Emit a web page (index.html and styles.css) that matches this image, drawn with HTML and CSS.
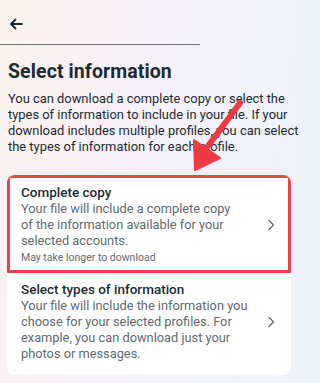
FILE: index.html
```html
<!DOCTYPE html>
<html>
<head>
<meta charset="utf-8">
<link rel="stylesheet" href="styles.css">
</head>
<body>
<div class="page">
  <header class="topbar">
    <svg class="back" width="14" height="12" viewBox="0 0 14 12"><path d="M13 6H2M6.5 1.5L2 6l4.5 4.5" fill="none" stroke="#1c2b33" stroke-width="1.8" stroke-linecap="round" stroke-linejoin="round"/></svg>
  </header>
  <main class="content">
    <h1 class="title">Select information</h1>
    <p class="intro">You can download a complete copy or select the types of information to include in your file. If your download includes multiple profiles, you can select the types of information for each profile.</p>
    <div class="card">
      <div class="item highlighted">
        <div class="item-text">
          <div class="item-title">Complete copy</div>
          <div class="item-desc">Your file will include a complete copy of the information available for your selected accounts.</div>
          <div class="item-note">May take longer to download</div>
        </div>
        <svg class="chev" width="8" height="12" viewBox="0 0 8 12"><path d="M2 1.5L6.5 6 2 10.5" fill="none" stroke="#5f6a72" stroke-width="1.3" stroke-linecap="round" stroke-linejoin="round"/></svg>
      </div>
      <div class="item">
        <div class="item-text">
          <div class="item-title">Select types of information</div>
          <div class="item-desc">Your file will include the information you choose for your selected profiles. For example, you can download just your photos or messages.</div>
        </div>
        <svg class="chev" width="8" height="12" viewBox="0 0 8 12"><path d="M2 1.5L6.5 6 2 10.5" fill="none" stroke="#5f6a72" stroke-width="1.3" stroke-linecap="round" stroke-linejoin="round"/></svg>
      </div>
    </div>
  </main>
  <svg class="annot-arrow" width="80" height="80" viewBox="0 0 80 80"><path d="M58 5 L 26 48" stroke="#ee3b43" stroke-width="6" stroke-linecap="round" fill="none"/><path d="M13 72 L12 42 L38 60 Z" fill="#ee3b43" stroke="#ee3b43" stroke-width="2" stroke-linejoin="round"/></svg>
</div>
</body>
</html>
```
FILE: styles.css
```css
* { box-sizing: border-box; }
html, body { margin: 0; padding: 0; background: #eef3fb; }
body {
  width: 300px;
  height: 383px;
  overflow: hidden;
  font-family: "Roboto", "Noto Sans", sans-serif;
  color: #1c2b33;
}
.page {
  position: relative;
  width: 300px;
  height: 383px;
  background: linear-gradient(100deg, #fdf3ef 0%, #f6f1f8 40%, #eef3fb 100%);
}
.topbar {
  height: 45px;
  width: 200px;
  border-bottom: 1px solid #6b7378;
  display: flex;
  align-items: center;
  padding-left: 9px;
  padding-top: 4px;
}
.back { display: block; }
.content { padding: 0 7px; }
.title {
  margin: 15px 0 0 1px;
  font-size: 19.5px;
  font-weight: 700;
  line-height: 24px;
  letter-spacing: 0.1px;
}
.intro {
  margin: 7px -7px 0 1px;
  font-size: 12.9px;
  line-height: 16px;
  color: #1c2b33;
}
.card {
  margin-top: 20px;
  background: #fff;
  border-radius: 8px;
  width: 284px;
  overflow: hidden;
}
.item {
  display: flex;
  align-items: center;
  padding: 8px 16px 13px 14px;
}
.item.highlighted {
  border: 3px solid #e8424b;
  padding: 6px 13px 4px 11px;
  border-radius: 1px;
}
.item-text { flex: 1; }
.item-title {
  font-size: 13.5px;
  font-weight: 500;
  line-height: 17px;
}
.item-desc {
  font-size: 12.8px;
  line-height: 16px;
  color: #5f6a72;
  width: 230px;
}
.highlighted .item-desc { width: 216px; }
.item-note {
  font-size: 10.5px;
  line-height: 16px;
  color: #5f6a72;
  margin-top: 1px;
}
.chev { flex: none; margin-left: 6px; }
.highlighted .chev { margin-left: 20px; }
.annot-arrow {
  position: absolute;
  left: 182px;
  top: 98px;
}
```
